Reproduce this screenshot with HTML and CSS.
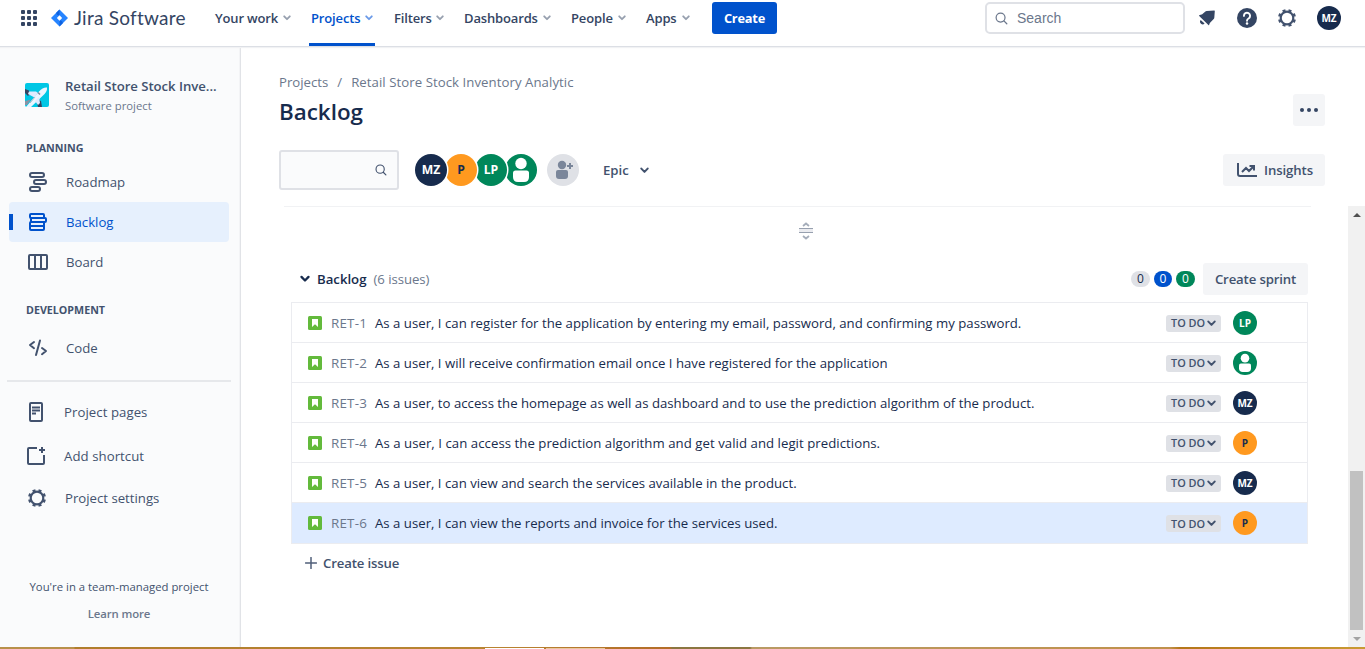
FILE: index.html
```html
<!DOCTYPE html>
<html lang="en">
<head>
<meta charset="utf-8">
<title>Backlog - Jira Software</title>
<link rel="stylesheet" href="styles.css">
</head>
<body>
<svg class="defs" aria-hidden="true">
  <symbol id="chev" viewBox="0 0 8 6"><path d="M1.2 1.3 4 4.2 6.8 1.3" fill="none" stroke="currentColor" stroke-width="1.800" stroke-linecap="round" stroke-linejoin="round"/></symbol>
  <symbol id="lens" viewBox="0 0 14 14"><circle cx="6" cy="6" r="4.800" fill="none" stroke="currentColor" stroke-width="1.300"/><path d="m9.600 9.600 3.100 3.100" stroke="currentColor" stroke-width="1.400" stroke-linecap="round"/></symbol>
  <symbol id="gear" viewBox="0 0 20 20"><circle cx="10" cy="10" r="6.300" fill="none" stroke="currentColor" stroke-width="2.200"/><circle cx="10" cy="10" r="7.900" fill="none" stroke="currentColor" stroke-width="2.200" pathLength="80" stroke-dasharray="5 5" stroke-dashoffset="-2.500"/></symbol>
  <symbol id="person" viewBox="0 0 32 32"><circle cx="16" cy="9.500" r="5.700" fill="#fff"/><path d="M8 19q0-2.500 2.500-2.500h11q2.500 0 2.500 2.500v4q0 5-5 5h-6q-5 0-5-5z" fill="#fff"/></symbol>
  <symbol id="story" viewBox="0 0 14 14"><rect width="14" height="14" rx="1.500" fill="#63ba3c"/><path d="M4 3h6v8L7 8.300 4 11z" fill="#fff"/></symbol>
</svg>

<header class="topbar">
  <svg class="switcher" viewBox="0 0 16 16" fill="#344563"><rect width="4" height="4" rx="1"/><rect x="6" width="4" height="4" rx="1"/><rect x="12" width="4" height="4" rx="1"/><rect y="6" width="4" height="4" rx="1"/><rect x="6" y="6" width="4" height="4" rx="1"/><rect x="12" y="6" width="4" height="4" rx="1"/><rect y="12" width="4" height="4" rx="1"/><rect x="6" y="12" width="4" height="4" rx="1"/><rect x="12" y="12" width="4" height="4" rx="1"/></svg>
  <div class="logo">
    <svg class="logo-mark" viewBox="0 0 18 18"><path d="M9 0 18 9 9 18 0 9z" fill="#2684ff"/><path d="M9 0 5.500 3.500Q5.500 6 9 6.500zM9 18l3.500-3.500Q12.500 12 9 11.500z" fill="#0f62e0"/><path d="m9 6.200 2.800 2.800L9 11.800 6.200 9z" fill="#fff"/></svg>
    <span class="logo-text">Jira Software</span>
  </div>
  <nav class="nav">
    <a class="nav-item w-work"><span>Your work</span><svg><use href="#chev"/></svg></a>
    <a class="nav-item w-projects active"><span>Projects</span><svg><use href="#chev"/></svg></a>
    <a class="nav-item w-filters"><span>Filters</span><svg><use href="#chev"/></svg></a>
    <a class="nav-item w-dash"><span>Dashboards</span><svg><use href="#chev"/></svg></a>
    <a class="nav-item w-people"><span>People</span><svg><use href="#chev"/></svg></a>
    <a class="nav-item w-apps"><span>Apps</span><svg><use href="#chev"/></svg></a>
  </nav>
  <button class="create">Create</button>
  <div class="tools">
    <div class="search"><svg><use href="#lens"/></svg><span>Search</span></div>
    <svg class="bell" viewBox="0 0 18 18"><path d="M16.300 1.400q.5 0 .5.5l-.5 6.700q-.1.700-.6 1.200l-3.400 3.400q-.6.600-.8 1.300l-.4 1.200q-.2.600-.7.100L1.200 6.700q-.5-.5.100-.7l2-.6q.7-.2 1.200-.7L7.400 2.200q.5-.5 1.200-.5z" transform="matrix(1 0 0 1 0 .2)" fill="#344563"/><path d="M2.700 11.100a2.500 2.500 0 0 0 3.900 3.300z" fill="#344563"/></svg>
    <svg class="help" viewBox="0 0 20 20"><circle cx="10" cy="10" r="10" fill="#344563"/><path d="M6.900 7.900a3.100 3.100 0 1 1 4.700 2.600Q10 11.300 10 12.700" fill="none" stroke="#fff" stroke-width="1.900" stroke-linecap="round"/><circle cx="10" cy="15.400" r="1.250" fill="#fff"/></svg>
    <svg class="settings"><use href="#gear"/></svg>
    <span class="avatar navy small">MZ</span>
  </div>
</header>

<div class="body">
  <aside class="sidebar">
    <div class="project">
      <svg class="project-icon" viewBox="0 0 24 24"><rect width="24" height="24" rx="2" fill="#00c7e5"/><path d="m0 6 4 1.500L5 11l-2 2-3-3zM11 16l5 2 1 6h-4z" fill="#344563"/><path d="M1 24 14 8.500q4-4.500 8-4Q22.500 8.500 18 12.500L6 24z" fill="#ebf5ff"/><path d="m4 8.500 7 0 2 1.500-3.500 4.500L3 11z" fill="#deebff"/><path d="m10 18 4-4 1 6-2 2z" fill="#deebff"/><path d="m0 18 6-1.500L2 22l-2 0z" fill="#8993a4"/><path d="m5 20 5-6" stroke="#b3bac5" stroke-width="1"/><path d="m13 9.500 2 2" stroke="#7a869a" stroke-width="1.500"/></svg>
      <div class="project-text"><strong>Retail Store Stock Inve...</strong><span>Software project</span></div>
    </div>
    <h2 class="group">PLANNING</h2>
    <a class="side-item"><svg viewBox="0 0 20 20" fill="none" stroke="currentColor" stroke-width="2"><rect x="2" y="1" width="14" height="4" rx="2"/><rect x="6" y="8" width="12" height="4" rx="2"/><rect x="2" y="15" width="10" height="4" rx="2"/></svg><span>Roadmap</span></a>
    <a class="side-item selected"><svg viewBox="0 0 20 20" fill="none" stroke="currentColor" stroke-width="2"><rect x="2" y="2" width="14" height="4" rx="1"/><rect x="3" y="6" width="15" height="4" rx="1"/><rect x="2" y="10" width="14" height="8" rx="1"/><path d="M2 14h14"/></svg><span>Backlog</span></a>
    <a class="side-item"><svg viewBox="0 0 20 20" fill="none" stroke="currentColor" stroke-width="2"><rect x="1" y="3" width="18" height="14" rx="1"/><path d="M7 3v14M13 3v14"/></svg><span>Board</span></a>
    <h2 class="group development">DEVELOPMENT</h2>
    <a class="side-item code"><svg viewBox="0 0 20 20" fill="none" stroke="currentColor" stroke-width="2" stroke-linecap="round" stroke-linejoin="round"><path d="M6 4 2 7l4 3.200M14 10l4 3-4 3.200M12 2.500 8 17"/></svg><span>Code</span></a>
    <hr class="rule">
    <a class="side-item pages"><svg viewBox="0 0 20 20" fill="none" stroke="currentColor" stroke-width="2"><rect x="4" y="1" width="12" height="18" rx="1"/><path d="M6 5.500h8M6 8.500h8M6 11.500h4" stroke-width="1.800"/></svg><span>Project pages</span></a>
    <a class="side-item shortcut"><svg viewBox="0 0 20 20" fill="none" stroke="currentColor" stroke-width="2"><path d="M11 2H3q-1 0-1 1v14q0 1 1 1h14q1 0 1-1V9M16 1v6M13 4h6"/></svg><span>Add shortcut</span></a>
    <a class="side-item prefs"><svg><use href="#gear"/></svg><span>Project settings</span></a>
    <footer class="managed"><p>You're in a team-managed project</p><a>Learn more</a></footer>
  </aside>

  <main class="main">
    <div class="heading">
      <div class="crumbs"><span class="crumb-root">Projects</span><span class="slash">/</span><span class="crumb-name">Retail Store Stock Inventory Analytic</span></div>
      <div class="title-row"><h1>Backlog</h1><button class="more"><i></i><i></i><i></i></button></div>
      <div class="filters">
        <div class="filter-search"><svg><use href="#lens"/></svg></div>
        <div class="people">
          <span class="avatar navy">MZ</span><span class="avatar orange">P</span><span class="avatar green">LP</span><span class="avatar green"><svg><use href="#person"/></svg></span>
        </div>
        <span class="avatar add"><svg viewBox="0 0 32 32" fill="#7a869a"><circle cx="15" cy="11" r="4.200"/><path d="M9 18q0-2 2-2h8q2 0 2 2v4q0 3-3 3h-6q-3 0-3-3z"/><path d="M23 9v6M20 12h6" stroke="#7a869a" stroke-width="2"/></svg></span>
        <div class="epic"><span>Epic</span><svg><use href="#chev"/></svg></div>
        <button class="insights"><svg viewBox="0 0 20 14" fill="none" stroke="currentColor" stroke-width="2"><path d="M1 0v11q0 2 2 2h17"/><path d="m5 9 4-4 3 3 5-5M12.500 3H17v4.500"/></svg><span>Insights</span></button>
      </div>
    </div>

    <div class="scroll-area">
      <section class="board">
        <div class="resizer"><svg viewBox="0 0 16 18"><path d="M5 4 8 1.500 11 4M5 14l3 2.500L11 14" fill="none" stroke="#a5adba" stroke-width="1.800"/><path d="M1 6.500h14v4H1z" fill="#ebecf0" stroke="none"/><path d="M1 6.500h14M1 10.500h14" stroke="#97a0af" stroke-width="1.200"/></svg></div>
        <div class="backlog-head">
          <svg class="toggle"><use href="#chev"/></svg><strong>Backlog</strong><span class="count">(6 issues)</span>
          <div class="badges"><b class="badge gray">0</b><b class="badge blue">0</b><b class="badge teal">0</b></div>
          <button class="sprint">Create sprint</button>
        </div>
        <div class="issues">
          <div class="issue"><svg class="type"><use href="#story"/></svg><span class="key">RET-1</span><span class="summary">As a user, I can register for the application by entering my email, password, and confirming my password.</span><span class="status">TO DO<svg><use href="#chev"/></svg></span><span class="avatar small green">LP</span></div>
          <div class="issue"><svg class="type"><use href="#story"/></svg><span class="key">RET-2</span><span class="summary">As a user, I will receive confirmation email once I have registered for the application</span><span class="status">TO DO<svg><use href="#chev"/></svg></span><span class="avatar small green"><svg><use href="#person"/></svg></span></div>
          <div class="issue"><svg class="type"><use href="#story"/></svg><span class="key">RET-3</span><span class="summary">As a user, to access the homepage as well as dashboard and to use the prediction algorithm of the product.</span><span class="status">TO DO<svg><use href="#chev"/></svg></span><span class="avatar small navy">MZ</span></div>
          <div class="issue"><svg class="type"><use href="#story"/></svg><span class="key">RET-4</span><span class="summary loose">As a user, I can access the prediction algorithm and get valid and legit predictions.</span><span class="status">TO DO<svg><use href="#chev"/></svg></span><span class="avatar small orange">P</span></div>
          <div class="issue"><svg class="type"><use href="#story"/></svg><span class="key">RET-5</span><span class="summary">As a user, I can view and search the services available in the product.</span><span class="status">TO DO<svg><use href="#chev"/></svg></span><span class="avatar small navy">MZ</span></div>
          <div class="issue current"><svg class="type"><use href="#story"/></svg><span class="key">RET-6</span><span class="summary">As a user, I can view the reports and invoice for the services used.</span><span class="status">TO DO<svg><use href="#chev"/></svg></span><span class="avatar small orange">P</span></div>
        </div>
        <div class="create-issue"><svg viewBox="0 0 12 12"><path d="M6 .500v11M.500 6h11" stroke="#505f79" stroke-width="1.500" stroke-linecap="round"/></svg><span>Create issue</span></div>
      </section>
      <div class="scrollbar"><i class="arrow up"></i><i class="thumb"></i><i class="arrow down"></i></div>
    </div>
  </main>
</div>
<div class="desktop-edge"><i class="tab"></i><i class="tab warm"></i></div>
</body>
</html>
```

FILE: styles.css
```css
* { box-sizing: border-box; }

body {
  margin: 0;
  width: 1365px;
  height: 649px;
  overflow: hidden;
  display: flex;
  flex-direction: column;
  background: #fff;
  color: #42526e;
  font: 13.2px/20px "Open Sans", "Noto Sans", sans-serif;
}

h1, h2, p { margin: 0; }
i { font-style: normal; }
strong { font-weight: 600; }
span, strong, p, h2, button { white-space: nowrap; }
svg { display: block; flex: none; }
button { border: 0; padding: 0; font: inherit; color: inherit; }
.defs { position: absolute; width: 0; height: 0; }

/* Top bar */
.topbar {
  flex: none;
  display: flex;
  align-items: center;
  height: 47px;
  padding: 0 24px 10px 21px;
  border-bottom: 1px solid #dcdfe5;
  box-shadow: 0 1px 1px #f1f2f4;
  z-index: 1;
}
.switcher { width: 16px; height: 16px; }
.logo { display: flex; align-items: center; width: 165px; margin-left: 14px; }
.logo-mark { width: 17px; height: 18px; }
.logo-text { margin-left: 6px; font: 19px/24px Lato, sans-serif; letter-spacing: 0.25px; color: #344563; }
.nav { display: flex; gap: 20px; height: 46px; margin-top: 10px; }
.nav-item {
  display: flex;
  justify-content: space-between;
  align-items: center;
  padding-bottom: 10px;
  font-size: 13px;
  font-weight: 600;
  letter-spacing: -0.15px;
  color: #344563;
}
.nav-item svg { width: 8px; height: 6px; color: #97a0af; }
.nav-item.active {
  margin: 0 -2px;
  padding: 0 2px 7px;
  border-bottom: 3px solid #0052cc;
  color: #0052cc;
}
.nav-item.active svg { color: #6b9ae8; }
.w-work { width: 76px; margin-left: -1px; }
.w-projects { width: 66px; }
.w-filters { width: 50px; margin-left: 1px; }
.w-dash { width: 87px; }
.w-people { width: 55px; }
.w-apps { width: 44px; }
.create {
  width: 65px;
  height: 32px;
  margin-left: 22px;
  border-radius: 3px;
  background: #0052cc;
  color: #fff;
  font-size: 12.800px;
  font-weight: 700;
  letter-spacing: -0.2px;
}
.tools { display: flex; align-items: center; margin-left: auto; }
.search {
  display: flex;
  align-items: center;
  gap: 9px;
  width: 200px;
  height: 32px;
  padding-left: 8px;
  border: 2px solid #dfe1e6;
  border-radius: 5px;
  font: 14px/20px "Liberation Sans", Arial, sans-serif;
  color: #6b778c;
}
.search svg { width: 13px; height: 13px; }
.bell { width: 18px; height: 18px; margin-left: 13px; }
.help { width: 20px; height: 20px; margin-left: 21px; }
.settings { width: 20px; height: 20px; margin: 0 20px; }

.avatar {
  display: flex;
  align-items: center;
  justify-content: center;
  flex: none;
  width: 32px;
  height: 32px;
  border-radius: 50%;
  font-size: 12.200px;
  font-weight: 700;
  color: #fff;
}
.avatar svg { width: 100%; height: 100%; }
.avatar.small { width: 24px; height: 24px; font-size: 10px; }
.navy { background: #172b4d; }
.green { background: #00875a; }
.orange, .avatar.orange { background: #ff991f; color: #172b4d; }

.body { flex: 1; display: flex; min-height: 0; }

/* Sidebar */
.sidebar {
  flex: none;
  display: flex;
  flex-direction: column;
  width: 241px;
  padding: 30px 10px 0 9px;
  border-right: 1px solid #e1e3e7;
  box-shadow: inset -1px 0 #f3f4f6;
  background: #fafbfc;
}
.project { display: flex; gap: 16px; padding-left: 16px; height: 38px; }
.project-icon { width: 24px; height: 24px; margin-top: 6px; }
.project-text { display: flex; flex-direction: column; }
.project-text strong { height: 20px; line-height: 18px; letter-spacing: -0.050px; }
.project-text span { font-size: 11.300px; line-height: 18px; color: #6b778c; }
.group {
  margin: 25px 0 6px 17px;
  height: 16px;
  font-size: 10.700px;
  line-height: 16px;
  font-weight: 700;
}
.side-item {
  display: flex;
  align-items: center;
  gap: 18px;
  width: 220px;
  height: 40px;
  padding-left: 19px;
  border-radius: 4px;
}
.side-item svg { width: 20px; height: 20px; }
.selected {
  background: linear-gradient(#0052cc, #0052cc) 0 50% / 4px 16px no-repeat #e6f0fd;
  color: #0052cc;
}
.development { margin-top: 20px; margin-bottom: 10px; }
.rule {
  width: 224px;
  height: 2px;
  margin: 12px 0 10px -2px;
  border: 0;
  background: #e6e8eb;
}
.pages, .shortcut, .prefs { padding-left: 17px; letter-spacing: 0.060px; }
.pages { margin-bottom: 4px; }
.shortcut { margin-bottom: 2px; }
.prefs { padding-left: 18px; letter-spacing: 0; }
.managed {
  display: flex;
  flex-direction: column;
  align-items: center;
  gap: 7px;
  margin-top: 59px;
  font-size: 11.350px;
}
.managed p, .managed a { margin-right: 1px; }
.managed a { font-weight: 600; letter-spacing: -0.1px; color: #6b778c; }

/* Page heading */
.main { flex: 1; display: flex; flex-direction: column; min-width: 0; }
.heading { height: 159px; padding: 25px 40px 0 38px; }
.crumbs { display: flex; gap: 9px; color: #6b778c; }
.crumb-name { letter-spacing: 0.060px; }
.title-row { display: flex; justify-content: space-between; height: 54px; }
h1 { margin-top: 6px; font-size: 22.400px; line-height: 28px; font-weight: 600; color: #172b4d; }
.more {
  display: flex;
  align-items: center;
  justify-content: center;
  gap: 3px;
  width: 32px;
  height: 32px;
  margin-top: 2px;
  border-radius: 3px;
  background: #f4f5f7;
}
.more i { width: 4px; height: 4px; border-radius: 50%; background: #344563; }
.filters { display: flex; align-items: center; margin-top: 4px; height: 40px; }
.filter-search {
  display: flex;
  align-items: center;
  justify-content: flex-end;
  width: 120px;
  height: 40px;
  padding-right: 10px;
  border: 2px solid #dfe1e6;
  border-radius: 3px;
  background: #fafbfc;
}
.filter-search svg { width: 12px; height: 12px; }
.people { display: flex; margin-left: 16px; }
.people .avatar { margin-right: -2px; position: relative; }
.people .avatar:nth-child(1) { z-index: 4; }
.people .avatar:nth-child(2) { z-index: 3; }
.people .avatar:nth-child(3) { z-index: 2; }
.people .avatar:not(:last-child) { box-shadow: 0 0 0 1.500px #fff; }
.add { margin-left: 12px; background: #dfe1e6; }
.epic { display: flex; align-items: center; gap: 11px; margin-left: 24px; font-weight: 600; }
.epic svg { width: 9px; height: 7px; }
.insights {
  display: flex;
  align-items: center;
  gap: 7px;
  width: 102px;
  height: 32px;
  margin-left: auto;
  padding-left: 14px;
  border-radius: 3px;
  background: #f4f5f7;
  font-weight: 600;
  letter-spacing: -0.1px;
}
.insights svg { width: 20px; height: 14px; }

/* Backlog list */
.scroll-area { flex: 1; display: flex; min-height: 0; }
.board { flex: 1; padding: 0 40px 0 50px; }
.resizer {
  display: flex;
  justify-content: center;
  margin: 0 -3px 0 -7px;
  padding: 15px 0 0 16px;
  height: 57px;
  border-top: 1px solid #f1f2f4;
}
.resizer svg { width: 16px; height: 18px; }
.backlog-head { display: flex; align-items: center; height: 32px; padding-left: 9px; color: #172b4d; }
.toggle { width: 10px; height: 8px; margin-right: 7px; }
.count { margin-left: 7px; letter-spacing: -0.050px; color: #6b778c; }
.badges { display: flex; gap: 4px; margin-left: auto; }
.badge {
  width: 19px;
  height: 16px;
  border-radius: 8px;
  text-align: center;
  font-size: 12px;
  line-height: 16px;
  font-weight: 400;
  color: #fff;
}
.badge.gray { background: #dfe1e6; color: #172b4d; }
.badge.blue { width: 18px; background: #0052cc; }
.badge.teal { background: #00875a; }
.sprint {
  width: 105px;
  height: 32px;
  margin-left: 8px;
  border-radius: 3px;
  background: #f4f5f7;
  color: #42526e;
  font-weight: 600;
  letter-spacing: -0.15px;
}
.issues { width: 1017px; margin-top: 7px; border: 1px solid #ebecf0; border-bottom: 0; }
.issue {
  display: flex;
  align-items: center;
  height: 40px;
  padding: 0 50px 0 16px;
  border-bottom: 1px solid #ebecf0;
  color: #172b4d;
}
.type { width: 14px; height: 14px; }
.key { width: 44px; margin-left: 9px; font-size: 13.400px; letter-spacing: 0.200px; color: #6b778c; }
.summary { letter-spacing: 0.006px; }
.summary.loose { letter-spacing: 0.045px; }
.status {
  display: flex;
  align-items: center;
  justify-content: space-between;
  width: 55px;
  height: 17px;
  margin: 1px 12px 0 auto;
  padding: 0 5px;
  border-radius: 3px;
  background: #dfe1e6;
  color: #42526e;
  font-size: 10.900px;
  font-weight: 600;
}
.status svg { width: 9px; height: 7px; }
.issue.current { height: 41px; background: #deebff; }
.create-issue { display: flex; align-items: center; gap: 6px; margin: 9px 0 0 14px; font-weight: 600; letter-spacing: -0.15px; }
.create-issue svg { width: 12px; height: 12px; }

.scrollbar {
  flex: none;
  display: flex;
  flex-direction: column;
  align-items: center;
  width: 17px;
  padding: 7px 0 6px;
  background: #f1f1f1;
}
.arrow { border: 4px solid transparent; border-top-width: 0; border-bottom: 4px solid #505050; }
.arrow.down { border-top: 4px solid #a3a3a3; border-bottom-width: 0; margin-top: 7px; }
.thumb { width: 13px; height: 159px; margin-top: auto; background: #c1c1c1; }

/* Strip of wallpaper under the window */
.desktop-edge {
  flex: none;
  display: flex;
  gap: 2px;
  height: 2px;
  padding: 1px 0 0 485px;
  background: linear-gradient(90deg, #b8904a 0, #b8904a 74px, #b07d2c 75px, #b98532 480px, #b46d28 670px, #8b7640 672px, #8b7640 750px, #b99a64 752px, #c0914b 1170px, #b57619 1180px, #c99a32 1365px);
}
.tab { width: 59px; height: 1px; background: #fff; }
.tab.warm { background: #e8c8a0; }
```
